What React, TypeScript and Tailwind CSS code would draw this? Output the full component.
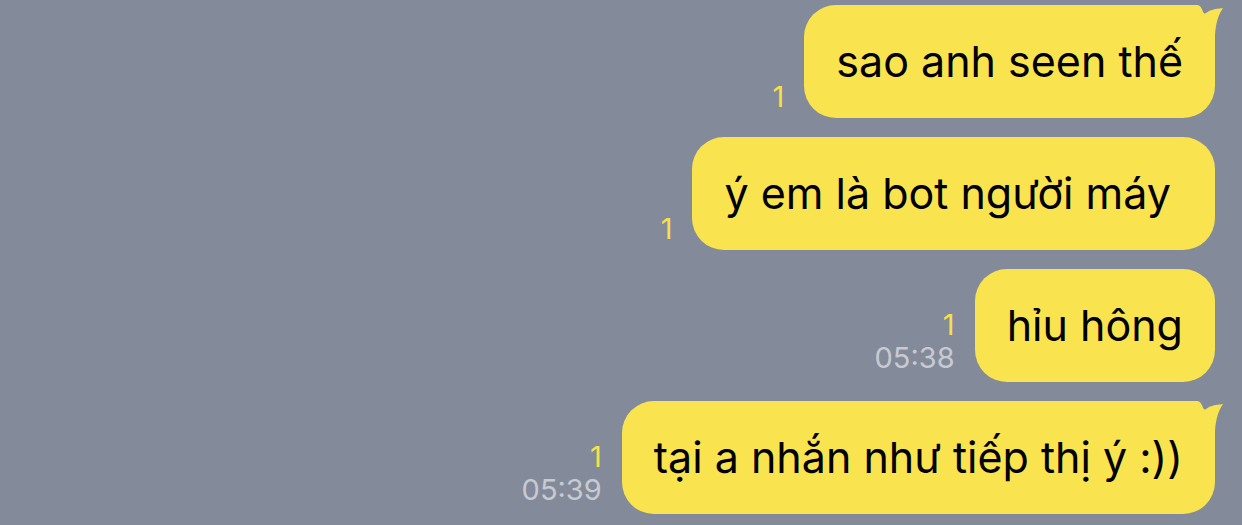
import React from "react";

const Tail = () => (
  <svg
    className="absolute top-0 right-[-10px]"
    width="42"
    height="36"
    viewBox="0 0 42 36"
  >
    <path
      d="M0,0 H14 C18,0 20,6 21,10 C25,5 32,4 40,3 C36,9 33,16 32,30 V36 H0 Z"
      fill="#f9e44f"
    />
  </svg>
);

type Msg = { text: string; read?: string; time?: string; tail?: boolean };

const msgs: Msg[] = [
  { text: "sao anh seen thế", read: "1", tail: true },
  { text: "ý em là bot người máy\u00a0", read: "1" },
  { text: "hỉu hông", read: "1", time: "05:38" },
  { text: "tại a nhắn như tiếp thị ý :))", read: "1", time: "05:39", tail: true },
];

export default function App() {
  return (
    <div
      className="w-[1242px] h-[525px] bg-[#838a99] overflow-hidden flex flex-col items-end pt-[5px] pr-[27px] gap-[19px]"
      style={{ fontFamily: "Inter, 'Noto Sans', sans-serif" }}
    >
      {msgs.map((m, i) => (
        <div key={i} className="flex items-end gap-[20px]">
          <div
            className={
              "flex flex-col items-end text-[29px] leading-[33px] " +
              (m.time ? "pb-[8px]" : "pb-[5px]")
            }
          >
            {m.read && <span className="text-[#f6e04c]">{m.read}</span>}
            {m.time && <span className="text-[#c7cad3]">{m.time}</span>}
          </div>
          <div className="relative h-[113px] flex items-center px-[32px] rounded-[32px] bg-[#f9e44f] text-black text-[43px]">
            {m.tail && <Tail />}
            <span className="relative whitespace-pre">{m.text}</span>
          </div>
        </div>
      ))}
    </div>
  );
}
